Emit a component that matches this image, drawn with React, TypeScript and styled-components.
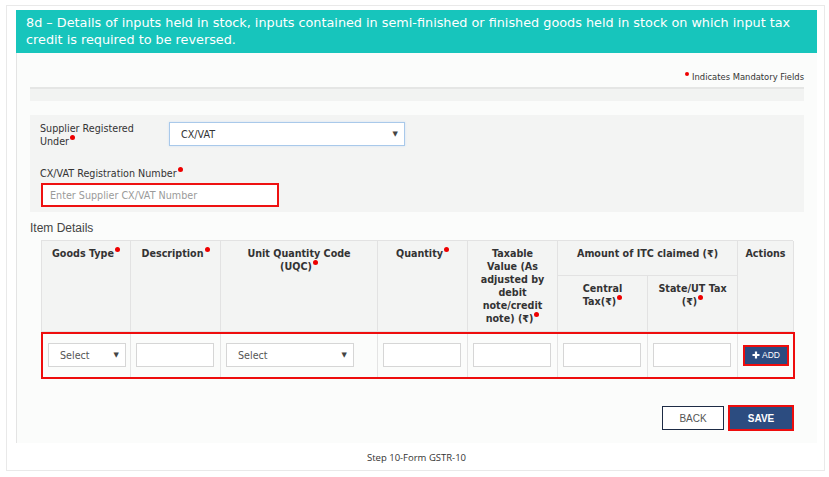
import React from 'react'
import styled, { createGlobalStyle } from 'styled-components'

const GlobalStyle = createGlobalStyle`
  html, body {
    margin: 0;
    padding: 0;
    background: #ffffff;
  }
  * {
    box-sizing: border-box;
  }
`

const verdana = `"DejaVu Sans", Verdana, sans-serif`

// outer screenshot frame with caption under it
const Frame = styled.div`
  margin: 5px 0 0 6px;
  width: 819px;
  height: 466px;
  border: 1px solid #e9e9e9;
  padding: 4px 7px 0 9px;
  display: flex;
  flex-direction: column;
`

const Header = styled.div`
  background: #17c5bc;
  color: #ffffff;
  font-family: ${verdana};
  font-size: 12.8px;
  line-height: 17px;
  padding: 4px 22px 4px 10px;
  height: 43px;
`

const Body = styled.div`
  background: #fbfcfb;
  border-left: 1px solid #e4e4e4;
  height: 390px;
  padding: 18px 13px 0 13px;
  display: flex;
  flex-direction: column;
`

const MandatoryNote = styled.div`
  align-self: flex-end;
  font-family: ${verdana};
  font-size: 8.4px;
  color: #333;
  line-height: 12px;
  height: 12px;
`

// red "required" marker
const Req = styled.span`
  display: inline-block;
  width: 5px;
  height: 5px;
  border-radius: 50%;
  background: #ee0000;
  vertical-align: 5px;
  margin-left: 1px;
`

const LeadReq = styled(Req)`
  vertical-align: 4px;
  margin: 0 3px 0 0;
  width: 4px;
  height: 4px;
`

const Strip = styled.div`
  margin-top: 4px;
  height: 14px;
  background: #f2f3f2;
  border-top: 2px solid #e5e6e5;
`

const FormPanel = styled.div`
  margin-top: 14px;
  height: 97px;
  background: #f3f4f3;
  padding: 7px 10px 0 10px;
  display: flex;
  flex-direction: column;
`

const FormRow = styled.div`
  display: flex;
  align-items: flex-start;
`

const Label = styled.div<{ $width?: number; $gap?: number }>`
  font-family: ${verdana};
  font-size: 9.6px;
  line-height: 13px;
  color: #333;
  width: ${({ $width }) => ($width ? `${$width}px` : 'auto')};
  margin-top: ${({ $gap }) => ($gap ? `${$gap}px` : '0')};
`

const FakeSelect = styled.div<{ $width: number; $focus?: boolean }>`
  width: ${({ $width }) => $width}px;
  height: 24px;
  background: #ffffff;
  border: 1px solid ${({ $focus }) => ($focus ? '#a9c9ea' : '#d6d6d6')};
  box-shadow: ${({ $focus }) => ($focus ? '0 0 2px #cfe2f5' : 'none')};
  display: flex;
  align-items: center;
  justify-content: space-between;
  padding: 0 6px 0 11px;
  font-family: ${verdana};
  font-size: 9.6px;
  color: ${({ $focus }) => ($focus ? '#333' : '#555')};
`

const Caret = styled.span`
  font-size: 7px;
  color: #444;
`

const RegInput = styled.div`
  margin-top: 3px;
  margin-left: 1px;
  width: 238px;
  height: 24px;
  border: 2px solid #ee1111;
  background: #ffffff;
  display: flex;
  align-items: center;
  padding-left: 7px;
  font-family: ${verdana};
  font-size: 9.6px;
  color: #9a9a9a;
`

const SectionTitle = styled.div`
  margin-top: 9px;
  font-family: "Liberation Sans", Arial, sans-serif;
  font-size: 12px;
  color: #444;
  line-height: 14px;
`

const cols = '89px 90px 157px 90px 90px 90px 90px 56px'

const HeadGrid = styled.div`
  margin: 5px 0 0 11px;
  width: 752px;
  display: grid;
  grid-template-columns: ${cols};
  grid-template-rows: 35px 56px;
  border-top: 1px solid #e2e2e2;
  border-left: 1px solid #e2e2e2;
  background: #f3f4f3;
`

const HeadCell = styled.div<{ $col: string; $row: string }>`
  grid-column: ${({ $col }) => $col};
  grid-row: ${({ $row }) => $row};
  border-right: 1px solid #e2e2e2;
  border-bottom: 1px solid #e2e2e2;
  padding: 6px 2px 0;
  text-align: center;
  font-family: ${verdana};
  font-weight: bold;
  font-size: 9.6px;
  line-height: 13px;
  color: #333;
`

const BodyRow = styled.div`
  margin-left: 11px;
  width: 754px;
  height: 47px;
  border: 2px solid #ee0d0d;
  display: grid;
  grid-template-columns: 88px 90px 157px 90px 90px 90px 90px 55px;
  background: #fbfcfb;
`

const BodyCell = styled.div<{ $last?: boolean }>`
  border-right: ${({ $last }) => ($last ? 'none' : '1px solid #e4e4e4')};
  display: flex;
  align-items: center;
  padding-left: 5px;
  padding-bottom: 1px;
`

const TextInput = styled.div`
  width: 78px;
  height: 24px;
  background: #ffffff;
  border: 1px solid #d6d6d6;
`

const AddButton = styled.button`
  width: 46px;
  height: 21px;
  background: #2b4b80;
  border: 2px solid #ee0d0d;
  color: #ffffff;
  font-family: "Liberation Sans", Arial, sans-serif;
  font-size: 8.5px;
  display: flex;
  align-items: center;
  justify-content: center;
  gap: 2px;
  padding: 0;
`

const ButtonRow = styled.div`
  margin-top: 26px;
  padding-right: 10px;
  display: flex;
  justify-content: flex-end;
  align-items: center;
  gap: 4px;
`

const ActionButton = styled.button<{ $primary?: boolean }>`
  height: ${({ $primary }) => ($primary ? '26px' : '24px')};
  width: ${({ $primary }) => ($primary ? '66px' : '62px')};
  background: ${({ $primary }) => ($primary ? '#2c4c80' : '#ffffff')};
  border: ${({ $primary }) => ($primary ? '2px solid #ee0d0d' : '1px solid #1d2b45')};
  color: ${({ $primary }) => ($primary ? '#ffffff' : '#555')};
  font-family: "Liberation Sans", Arial, sans-serif;
  font-size: 10px;
  font-weight: ${({ $primary }) => ($primary ? 'bold' : 'normal')};
  padding: 0;
`

const Caption = styled.div`
  text-align: center;
  margin-top: 8px;
  font-family: "Open Sans", sans-serif;
  font-size: 9.5px;
  color: #333;
`

const PlusIcon = () => (
  <svg width="8" height="8" viewBox="0 0 8 8">
    <path d="M4 0.5v7M0.5 4h7" stroke="#fff" strokeWidth="2.2" />
  </svg>
)

export default function App() {
  return (
    <>
      <GlobalStyle />
      <Frame>
        <Header>
          8d – Details of inputs held in stock, inputs contained in semi-finished or finished goods held in stock on which input tax credit is required to be reversed.
        </Header>
        <Body>
          <MandatoryNote>
            <LeadReq />Indicates Mandatory Fields
          </MandatoryNote>
          <Strip />
          <FormPanel>
            <FormRow>
              <Label $width={129}>
                Supplier Registered
                <br />
                Under<Req />
              </Label>
              <FakeSelect $width={236} $focus>
                <span>CX/VAT</span>
                <Caret>▼</Caret>
              </FakeSelect>
            </FormRow>
            <Label $gap={19}>
              CX/VAT Registration Number<Req />
            </Label>
            <RegInput>Enter Supplier CX/VAT Number</RegInput>
          </FormPanel>
          <SectionTitle>Item Details</SectionTitle>
          <HeadGrid>
            <HeadCell $col="1" $row="1 / 3">Goods Type<Req /></HeadCell>
            <HeadCell $col="2" $row="1 / 3">Description<Req /></HeadCell>
            <HeadCell $col="3" $row="1 / 3">Unit Quantity Code<br />(UQC)<Req /></HeadCell>
            <HeadCell $col="4" $row="1 / 3">Quantity<Req /></HeadCell>
            <HeadCell $col="5" $row="1 / 3">
              Taxable<br />Value (As<br />adjusted by<br />debit<br />note/credit<br />note) (₹)<Req />
            </HeadCell>
            <HeadCell $col="6 / 8" $row="1">Amount of ITC claimed (₹)</HeadCell>
            <HeadCell $col="6" $row="2">Central<br />Tax(₹)<Req /></HeadCell>
            <HeadCell $col="7" $row="2">State/UT Tax<br />(₹)<Req /></HeadCell>
            <HeadCell $col="8" $row="1 / 3">Actions</HeadCell>
          </HeadGrid>
          <BodyRow>
            <BodyCell>
              <FakeSelect $width={78}>
                <span>Select</span>
                <Caret>▼</Caret>
              </FakeSelect>
            </BodyCell>
            <BodyCell><TextInput /></BodyCell>
            <BodyCell><FakeSelect $width={128}><span>Select</span><Caret>▼</Caret></FakeSelect></BodyCell>
            <BodyCell><TextInput /></BodyCell>
            <BodyCell><TextInput /></BodyCell>
            <BodyCell><TextInput /></BodyCell>
            <BodyCell><TextInput /></BodyCell>
            <BodyCell $last><AddButton><PlusIcon />ADD</AddButton></BodyCell>
          </BodyRow>
          <ButtonRow>
            <ActionButton>BACK</ActionButton>
            <ActionButton $primary>SAVE</ActionButton>
          </ButtonRow>
        </Body>
        <Caption>Step 10-Form GSTR-10</Caption>
      </Frame>
    </>
  )
}
